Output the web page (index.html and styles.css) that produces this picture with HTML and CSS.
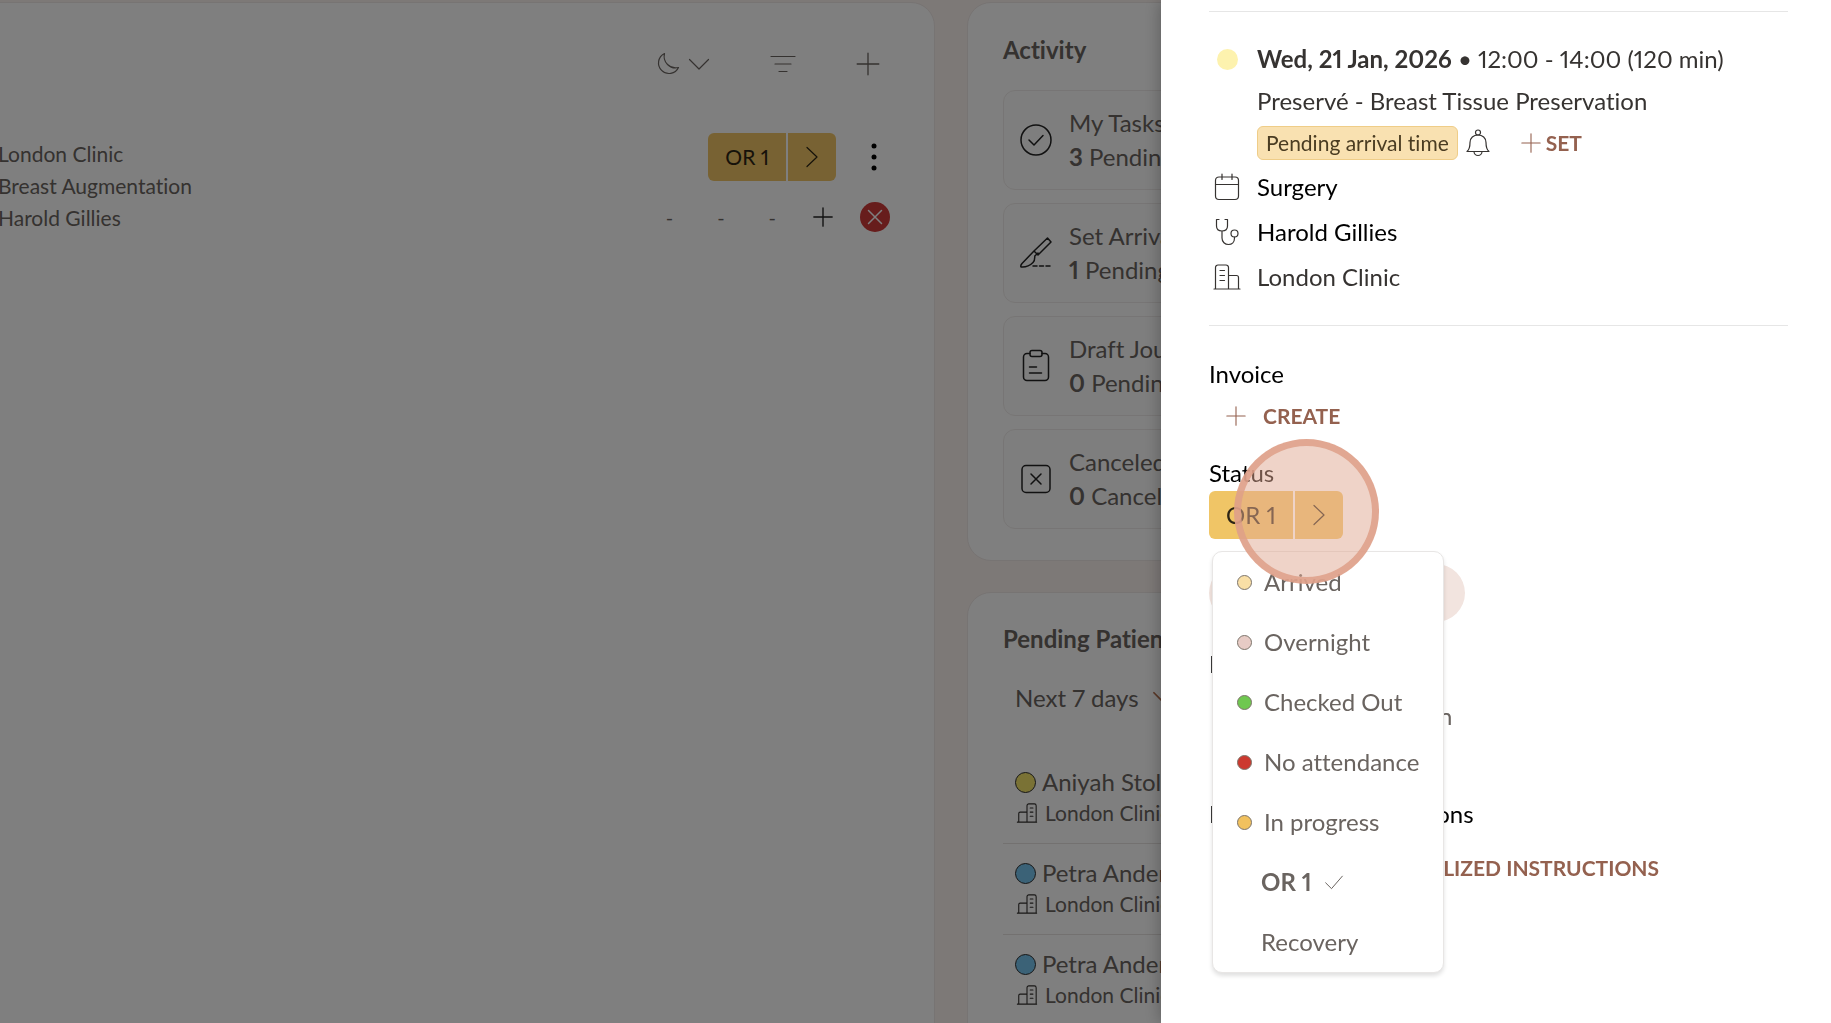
FILE: index.html
```html
<!DOCTYPE html>
<html lang="en">
<head>
    <meta charset="utf-8">
    <meta name="viewport" content="width=device-width, initial-scale=1.0">
    <title>Appointments</title>
    <link rel="stylesheet" href="styles.css">
</head>
<body>
    <svg class="sprite" aria-hidden="true">
        <symbol id="icon-plus" viewBox="0 0 24 24"><path d="M12 2v20M2 12h20"/></symbol>
        <symbol id="icon-chevron-right" viewBox="0 0 24 24"><path d="M7 2.500l10 9.500-10 9.500"/></symbol>
        <symbol id="icon-chevron-down" viewBox="0 0 24 24"><path d="M2.500 7.500l9.500 9.500 9.500-9.500"/></symbol>
        <symbol id="icon-building" viewBox="0 0 28 28">
            <path d="M1 26h26M2.500 26V4.500a2.500 2.500 0 0 1 2.500-2.500h8a2.500 2.500 0 0 1 2.500 2.500V26M15.500 12.500h8a2 2 0 0 1 2 2V26M7 7.500h4.500M7 12.500h4.500M7 17.500h4.500"/>
        </symbol>
        <symbol id="icon-clinic" viewBox="0 0 24 24">
            <path d="M1.500 22h21M3 22V12.500A1.500 1.500 0 0 1 4.500 11H12M12 22V4a2 2 0 0 1 2-2h6a2 2 0 0 1 2 2v18M15.500 6.500h3M15.500 11h3M15.500 15.500h3"/>
        </symbol>
    </svg>

    <main class="page">
        <section class="card schedule">
            <div class="toolbar">
                <button class="icon-btn shift" aria-label="Shift">
                    <svg class="icon" width="24" height="24" viewBox="0 0 24 24"><path d="M8.500 1.500A10.500 10.500 0 1 0 22.500 15.500 11.500 11.500 0 0 1 8.500 1.500z"/></svg>
                    <svg class="icon" width="24" height="24"><use href="#icon-chevron-down"/></svg>
                </button>
                <button class="icon-btn" aria-label="Filter">
                    <svg class="icon" width="26" height="24" viewBox="0 0 26 24"><path d="M1 4.500h24M5 12h16M9 19.500h8"/></svg>
                </button>
                <button class="icon-btn" aria-label="Add">
                    <svg class="icon" width="26" height="26"><use href="#icon-plus"/></svg>
                </button>
            </div>
            <div class="booking">
                <div class="booking-info">
                    <p>London Clinic</p>
                    <p>Breast Augmentation</p>
                    <p>Harold Gillies</p>
                </div>
                <div class="booking-side">
                    <div class="booking-status">
                        <div class="status-control">
                            <button class="status-label">OR 1</button>
                            <button class="status-next" aria-label="Next status"><svg class="icon" width="24" height="24"><use href="#icon-chevron-right"/></svg></button>
                        </div>
                        <button class="icon-btn more" aria-label="More">
                            <svg width="8" height="30" viewBox="0 0 8 30"><circle cx="4" cy="4" r="2.500"/><circle cx="4" cy="15" r="2.500"/><circle cx="4" cy="26" r="2.500"/></svg>
                        </button>
                    </div>
                    <div class="booking-marks">
                        <span>-</span>
                        <span>-</span>
                        <span>-</span>
                        <button class="icon-btn add-mark" aria-label="Add mark"><svg class="icon dark" width="22" height="22"><use href="#icon-plus"/></svg></button>
                        <button class="icon-btn" aria-label="Cancel">
                            <svg width="30" height="30" viewBox="0 0 30 30"><circle class="cancel-disc" cx="15" cy="15" r="15"/><path class="cancel-cross" d="M8.500 8.500l13 13M21.500 8.500l-13 13"/></svg>
                        </button>
                    </div>
                </div>
            </div>
        </section>

        <div class="sidebar">
            <section class="card activity">
                <h2>Activity</h2>
                <a class="task" href="#">
                    <svg class="icon dark" width="34" height="34" viewBox="0 0 34 34"><circle cx="17" cy="17" r="15"/><path d="M10 17l5 5 9-9.500"/></svg>
                    <span>My Tasks<br><b>3</b> Pending</span>
                </a>
                <a class="task" href="#">
                    <svg class="icon dark" width="34" height="34" viewBox="0 0 34 34"><path d="M28.500 2l3.500 4-13 13-4-4zM15 15l-12 12.500c-1 1.200-1.500 2.500-1 3.500 5 .5 9.500-2 12-4.500 2-2 1.800-4.500 1.800-6.500L19 17"/><path d="M14 30h17" stroke-dasharray="4 2.500"/></svg>
                    <span>Set Arrival Time<br><b>1</b> Pending</span>
                </a>
                <a class="task" href="#">
                    <svg class="icon dark" width="34" height="34" viewBox="0 0 34 34"><path d="M11 4.500H8a3.500 3.500 0 0 0-3.500 3.500v20A3.500 3.500 0 0 0 8 31.500h18a3.500 3.500 0 0 0 3.500-3.500V8A3.500 3.500 0 0 0 26 4.500h-3M10.500 18h7M10.500 24h12"/><rect x="11" y="1.500" width="12" height="6" rx="2"/></svg>
                    <span>Draft Journals<br><b>0</b> Pending</span>
                </a>
                <a class="task" href="#">
                    <svg class="icon dark" width="34" height="34" viewBox="0 0 34 34"><rect x="3" y="3.500" width="28" height="27" rx="4"/><path d="M12 12l10 10M22 12l-10 10"/></svg>
                    <span>Canceled<br><b>0</b> Canceled</span>
                </a>
            </section>

            <section class="card pending">
                <h2>Pending Patients</h2>
                <button class="range">Next 7 days
                    <svg class="icon" width="28" height="28"><use href="#icon-chevron-down"/></svg>
                </button>
                <ul class="patients">
                    <li>
                        <p class="patient"><span class="disc yellow"></span>Aniyah Stoltenberg</p>
                        <p class="clinic"><svg class="icon" width="22" height="22"><use href="#icon-clinic"/></svg>London Clinic</p>
                    </li>
                    <li>
                        <p class="patient"><span class="disc blue"></span>Petra Anderson</p>
                        <p class="clinic"><svg class="icon" width="22" height="22"><use href="#icon-clinic"/></svg>London Clinic</p>
                    </li>
                    <li>
                        <p class="patient"><span class="disc blue"></span>Petra Anderson</p>
                        <p class="clinic"><svg class="icon" width="22" height="22"><use href="#icon-clinic"/></svg>London Clinic</p>
                    </li>
                </ul>
            </section>
        </div>
    </main>

    <div class="backdrop"></div>

    <aside class="drawer">
        <section class="details">
            <div class="row">
                <span class="mark"><span class="dot-event"></span></span>
                <p><b>Wed, 21 Jan, 2026</b> • 12:00 - 14:00 (120 min)</p>
            </div>
            <div class="row">
                <span class="mark"></span>
                <p>Preservé - Breast Tissue Preservation</p>
            </div>
            <div class="row">
                <span class="mark"></span>
                <span class="badge">Pending arrival time</span>
                <svg class="icon bell" width="24" height="28" viewBox="0 0 24 28"><circle cx="12" cy="3.500" r="2.500"/><path d="M1 22.500c2.500-2 3-5 3-9C4 9 7.500 6 12 6s8 3 8 7.500c0 4 .5 7 3 9zM8 22.500a4 4 0 0 0 8 0"/></svg>
                <button class="link-btn set"><svg class="icon" width="22" height="22"><use href="#icon-plus"/></svg>SET</button>
            </div>
            <div class="row strong">
                <span class="mark"><svg class="icon" width="28" height="28" viewBox="0 0 28 28"><rect x="2.500" y="4" width="23" height="22.500" rx="3.500"/><path d="M2.500 11.500h23M9 1v5.500M19 1v5.500"/></svg></span>
                <p>Surgery</p>
            </div>
            <div class="row strong">
                <span class="mark"><svg class="icon" width="28" height="28" viewBox="0 0 28 28"><path d="M6 1.500H3.500V8c0 3 2 5 5.500 5s5.500-2 5.500-5V1.500H12M9 13v7c0 4 3 6.500 6.500 6.500s6-2.500 6-6.500v-1"/><circle cx="21.500" cy="15.500" r="3.500"/></svg></span>
                <p>Harold Gillies</p>
            </div>
            <div class="row">
                <span class="mark"><svg class="icon" width="28" height="28"><use href="#icon-building"/></svg></span>
                <p>London Clinic</p>
            </div>
        </section>

        <section class="billing">
            <h3>Invoice</h3>
            <button class="link-btn"><svg class="icon" width="22" height="22"><use href="#icon-plus"/></svg>CREATE</button>
        </section>

        <section class="status">
            <h3>Status</h3>
            <div class="status-control">
                <button class="status-label">OR 1</button>
                <button class="status-next" aria-label="Next status"><svg class="icon" width="24" height="24"><use href="#icon-chevron-right"/></svg></button>
            </div>
            <ul class="menu">
                <li><button><span class="dot arrived"></span>Arrived</button></li>
                <li><button><span class="dot overnight"></span>Overnight</button></li>
                <li><button><span class="dot checked-out"></span>Checked Out</button></li>
                <li><button><span class="dot no-attendance"></span>No attendance</button></li>
                <li><button><span class="dot in-progress"></span>In progress</button></li>
                <li><button class="room selected">OR 1 <svg class="icon" width="20" height="20" viewBox="0 0 24 24"><path d="M2 13l7 7L22 5"/></svg></button></li>
                <li><button class="room">Recovery</button></li>
            </ul>
            <span class="click-ring"></span>
        </section>

        <div class="pill"></div>

        <section class="extra">
            <h3>Interpreter</h3>
            <p>No interpreter chosen</p>
        </section>

        <section class="instructions">
            <h3>Preoperative Instructions</h3>
            <button class="link-btn"><svg class="icon" width="22" height="22"><use href="#icon-plus"/></svg>CREATE PERSONALIZED INSTRUCTIONS</button>
        </section>
    </aside>
</body>
</html>
```
FILE: styles.css
```css
* {
    box-sizing: border-box;
}

body {
    margin: 0;
    height: 100vh;
    overflow: hidden;
    font-family: Lato, "Open Sans", sans-serif;
    font-size: 24px;
    line-height: 34px;
    font-variant-ligatures: none;
    font-variant-numeric: proportional-nums;
    color: #363331;
    background: #fbf2ef;
}

h2, h3, p, ul {
    margin: 0;
    padding: 0;
}

h2 {
    font-size: 24px;
    font-weight: 700;
}

h3 {
    font-size: 24px;
    font-weight: 400;
    color: #000;
}

ul {
    list-style: none;
}

button {
    font: inherit;
    color: inherit;
    padding: 0;
    border: none;
    background: none;
    cursor: pointer;
}

a {
    color: inherit;
    text-decoration: none;
}

.sprite {
    display: none;
}

.icon {
    flex: none;
    fill: none;
    stroke: currentColor;
    stroke-width: 1.2;
    stroke-linecap: round;
    stroke-linejoin: round;
}

.icon.dark {
    color: #222;
    stroke-width: 1.5;
}

/* Page behind the drawer */
.page {
    display: grid;
    grid-template-columns: 1fr 832px;
    gap: 32px;
    height: 100vh;
    margin-left: -40px;
    padding: 2px 32px 0 0;
    overflow: hidden;
    color: #6a6460;
}

.card {
    background: #fff;
    border: 1px solid #eee8e6;
    border-radius: 24px;
}

.schedule {
    height: 1100px;
    padding: 47px 44px 0 37px;
}

.icon-btn {
    display: flex;
    align-items: center;
    justify-content: center;
}

.toolbar {
    display: flex;
    justify-content: flex-end;
    align-items: center;
    gap: 59px;
    height: 28px;
    padding-right: 9px;
}

.shift {
    gap: 7px;
}

.booking {
    display: flex;
    justify-content: space-between;
    padding-top: 55px;
}

.booking-info {
    padding-top: 5px;
    font-size: 21px;
    line-height: 32px;
}

.booking-status {
    display: flex;
    justify-content: flex-end;
    align-items: center;
    gap: 34px;
    padding-right: 12px;
}

.booking-marks {
    display: flex;
    justify-content: flex-end;
    align-items: center;
    gap: 44px;
    height: 72px;
    font-size: 20px;
}

.add-mark {
    margin: 0 -18px 0 -8px;
}

.cancel-disc {
    fill: #cf3a38;
}

.cancel-cross {
    fill: none;
    stroke: #fff;
    stroke-width: 1.5;
    stroke-linecap: round;
}

.status-control {
    display: flex;
    gap: 2px;
    width: max-content;
    height: 48px;
    color: #2c2414;
}

.status-label,
.status-next {
    display: flex;
    align-items: center;
    justify-content: center;
    background: #f0c566;
}

.status-label {
    padding: 0 17px;
    border-radius: 6px 0 0 6px;
}

.status-next {
    width: 48px;
    border-radius: 0 6px 6px 0;
}

.booking .status-label {
    font-size: 21px;
}

.sidebar {
    display: flex;
    flex-direction: column;
    gap: 31px;
}

.activity {
    display: flex;
    flex-direction: column;
    gap: 13px;
    padding: 30px 35px 31px;
}

.activity h2 {
    padding-bottom: 10px;
}

.task {
    display: flex;
    align-items: center;
    gap: 16px;
    padding: 15px;
    border: 1px solid #efebea;
    border-radius: 12px;
    background: #fdfdfd;
}

.pending {
    flex: none;
    height: 600px;
    padding: 29px 35px;
}

.range {
    display: flex;
    align-items: center;
    gap: 12px;
    padding: 25px 12px 38px;
}

.range .icon {
    color: #b5714f;
    stroke-width: 1.5;
}

.patients li {
    height: 91px;
    padding: 12px 12px 0;
    border-bottom: 1px solid #e6e2e0;
}

.patient,
.clinic {
    display: flex;
    align-items: center;
}

.patient {
    gap: 6px;
}

.clinic {
    gap: 7px;
    padding-left: 1px;
    font-size: 21px;
    line-height: 28px;
}

.clinic .icon {
    color: #33302e;
}

.disc {
    width: 21px;
    height: 21px;
    border: 1px solid #2c2c2c;
    border-radius: 50%;
}

.disc.yellow {
    background: #f5e56b;
}

.disc.blue {
    background: #77c4ee;
}

.backdrop {
    position: fixed;
    inset: 0;
    background: rgba(0, 0, 0, 0.5);
}

/* Drawer */
.drawer {
    position: fixed;
    top: 0;
    right: 0;
    bottom: 0;
    width: 670px;
    padding: 11px 43px 0 48px;
    overflow: hidden;
    background: #fff;
    box-shadow: 0 0 16px rgba(0, 0, 0, 0.3);
}

.details {
    padding: 26px 0;
    border-top: 1px solid #e6e6e6;
    border-bottom: 1px solid #e6e6e6;
}

.row {
    display: flex;
    align-items: center;
    height: 42px;
}

.mark {
    display: flex;
    justify-content: center;
    width: 36px;
    margin-right: 12px;
}

.dot-event {
    width: 21px;
    height: 21px;
    border-radius: 50%;
    background: #fdf2ae;
}

.strong,
.strong ~ .row {
    height: 45px;
}

.strong p {
    color: #000;
}

.badge {
    padding: 2px 8px;
    font-size: 21px;
    line-height: 28px;
    border: 1px solid #efcd88;
    border-radius: 6px;
    background: #f9e1b1;
    color: #4a3c22;
}

.bell {
    margin: 0 30px 0 8px;
}

.link-btn {
    display: flex;
    align-items: center;
    gap: 16px;
    height: 42px;
    padding-left: 16px;
    font-size: 21px;
    font-weight: 700;
    color: #94614f;
}

.link-btn.set {
    gap: 4px;
    padding-left: 0;
}

.billing {
    padding-top: 31px;
}

.billing h3 {
    padding-bottom: 4px;
}

.status {
    position: relative;
    padding-top: 19px;
}

.status h3 {
    padding-bottom: 1px;
}

.menu {
    position: absolute;
    z-index: 1;
    top: 114px;
    left: 3px;
    width: 232px;
    border: 1px solid #e8e6e5;
    border-radius: 10px;
    background: #fff;
    box-shadow: 0 3px 4px rgba(0, 0, 0, 0.12);
}

.menu button {
    display: flex;
    align-items: center;
    gap: 12px;
    width: 100%;
    height: 60px;
    padding-left: 24px;
    color: #6a6460;
}

.menu .room {
    padding-left: 48px;
}

.menu .selected {
    font-weight: 700;
}

.dot {
    width: 15px;
    height: 15px;
    border: 1px solid #7d756c;
    border-radius: 50%;
}

.arrived {
    background: #f9dfa6;
}

.overnight {
    background: #e7cbc5;
}

.checked-out {
    background: #6fc850;
}

.no-attendance {
    background: #cc392f;
}

.in-progress {
    background: #f1c15e;
}

.click-ring {
    position: absolute;
    z-index: 2;
    top: 2px;
    left: 25px;
    width: 145px;
    height: 145px;
    border: 7px solid rgba(222, 160, 136, 0.85);
    border-radius: 50%;
    background: rgba(223, 167, 145, 0.5);
    pointer-events: none;
}

.pill {
    width: 256px;
    height: 58px;
    margin-top: 25px;
    border-radius: 29px;
    background: #f2e4df;
}

.extra {
    padding-top: 25px;
}

.extra p {
    padding: 18px 0 0 12px;
    color: #6a6460;
}

.instructions {
    padding-top: 64px;
}

.instructions h3 {
    padding-bottom: 16px;
}
```
